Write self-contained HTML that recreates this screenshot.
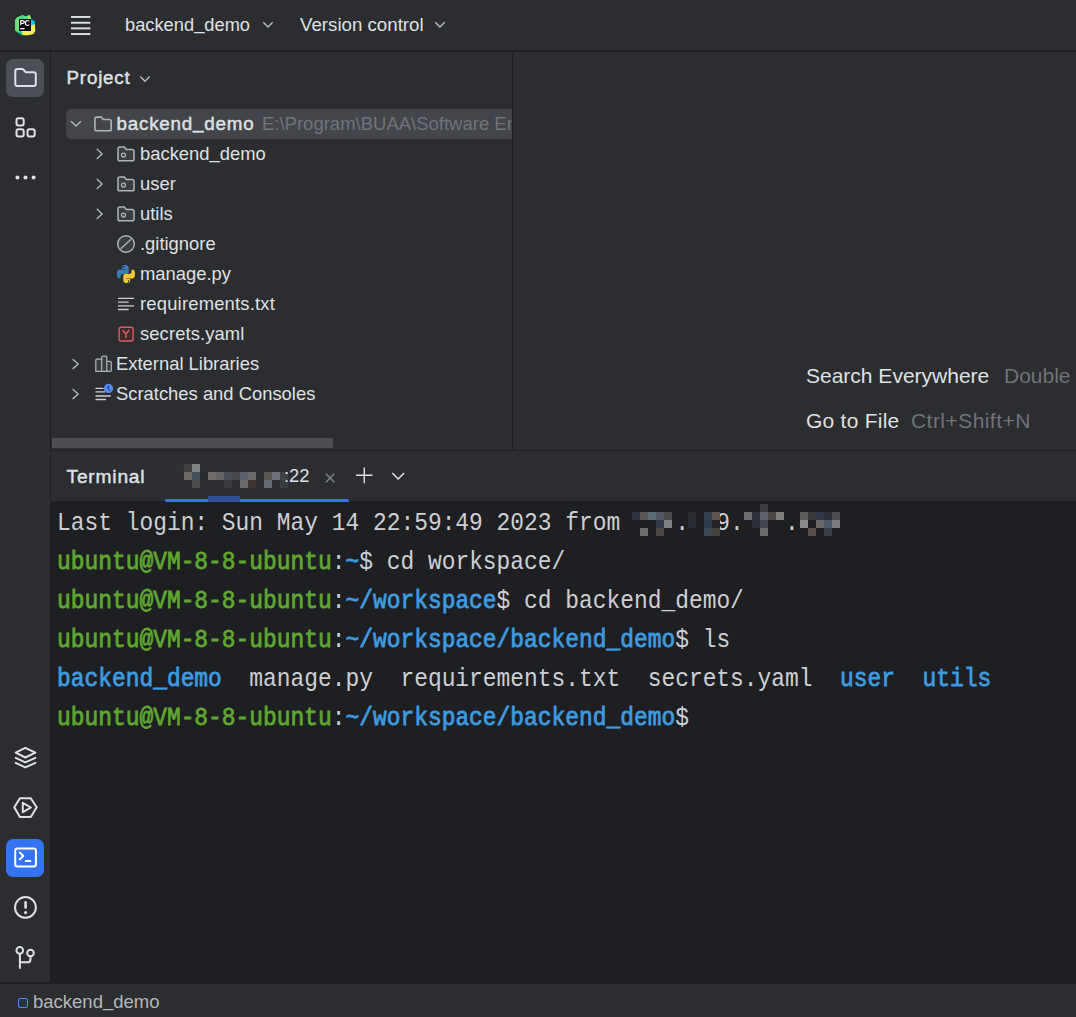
<!DOCTYPE html>
<html><head><meta charset="utf-8">
<style>
*{margin:0;padding:0;box-sizing:border-box}
html,body{width:1076px;height:1017px;overflow:hidden;background:#2B2D30}
body{position:relative;font-family:"Liberation Sans",sans-serif;color:#DFE1E5}
.a{position:absolute}
.t{position:absolute;white-space:pre;line-height:1}
.tl{position:absolute;white-space:pre;line-height:1;font-family:"Liberation Mono",monospace;font-size:22.9px;color:#CDCFD4;transform:scaleY(1.12);transform-origin:0 0}
.g{color:#5FA730;-webkit-text-stroke:0.7px #5FA730}
.bl{color:#3D9BE0;-webkit-text-stroke:0.7px #3D9BE0}
svg{position:absolute;left:0;top:0;overflow:visible}
.u{position:relative;top:-2px}
</style></head><body>

<div class="a" style="left:0;top:50px;width:1076px;height:2px;background:#1E1F22"></div>
<div class="a" style="left:50px;top:51px;width:1px;height:931px;background:#1E1F22"></div>
<div class="a" style="left:512px;top:51px;width:1px;height:399px;background:#1E1F22"></div>
<div class="a" style="left:51px;top:450px;width:1025px;height:1px;background:#1E1F22"></div>
<div class="a" style="left:51px;top:501px;width:1025px;height:481px;background:#1E1F22"></div>
<div class="a" style="left:0;top:982px;width:1076px;height:2px;background:#1E1F22"></div>
<div class="a" style="left:6px;top:58.5px;width:38px;height:38px;background:#4C4F55;border-radius:7px"></div>
<div class="a" style="left:6px;top:838.5px;width:38px;height:38px;background:#3574F0;border-radius:7px"></div>
<div class="a" style="left:66px;top:109px;width:446px;height:30px;background:#43454A;border-radius:5px 0 0 5px"></div>
<div class="a" style="left:52px;top:438px;width:281px;height:10px;background:#4D4E52"></div>
<div class="a" style="left:165px;top:499px;width:184px;height:3px;background:#3574F0;border-radius:1.5px"></div>
<svg width="1076" height="1017" viewBox="0 0 1076 1017">
<g>
<polygon points="15,20 17,17.5 22,15 26,16.5 29.6,14.8 31.2,19 31.2,31 21,31 22.5,35.2 17.5,32.5 15.2,30.5" fill="#3DDC84"/>
<polygon points="15,20 17,17.5 20,16.2 19,31 15.2,30.5" fill="#6BE07A"/>
<polygon points="22,15 26,16.5 29.6,14.8 31.2,19 24,19" fill="#4EE08A"/>
<polygon points="27,17 29.6,14.8 31.2,19 28,19" fill="#A9E55A"/>
<polygon points="21,31 31,31 31,24 34.8,23.5 35.3,31 33.5,34 28,35.2 22.5,35.2" fill="#F5F24A"/>
<polygon points="31,19.2 35,21.3 34.6,24.2 31,25.5" fill="#07C3F2"/>
<polygon points="17.5,32.5 22.5,35.2 21,31" fill="#17C39A"/>
<rect x="19" y="19" width="12" height="12" fill="#000"/>
<rect x="20.2" y="28" width="4.4" height="1.3" fill="#fff"/>
<path d="M20.8 25.3 V20.6 H22.8 Q24.3 20.6 24.3 22 Q24.3 23.4 22.8 23.4 H20.8" fill="none" stroke="#fff" stroke-width="1.2"/>
<path d="M29.3 21.3 Q28.6 20.5 27.4 20.5 Q25.4 20.5 25.4 22.95 Q25.4 25.4 27.4 25.4 Q28.6 25.4 29.3 24.6" fill="none" stroke="#fff" stroke-width="1.2"/>
</g>
<rect x="71" y="16" width="19.3" height="1.9" fill="#DFE1E5"/>
<rect x="71" y="21.8" width="19.3" height="1.9" fill="#DFE1E5"/>
<rect x="71" y="27.4" width="19.3" height="1.9" fill="#DFE1E5"/>
<rect x="71" y="33.1" width="19.3" height="1.9" fill="#DFE1E5"/>
<path d="M263.3 22.3 L267.95 27 L272.65 22.3" fill="none" stroke="#B7BAC1" stroke-width="1.5"/>
<path d="M435.3 22.3 L439.95 27 L444.65 22.3" fill="none" stroke="#B7BAC1" stroke-width="1.5"/>
<path d="M140.3 76.5 L145 81.2 L149.7 76.5" fill="none" stroke="#B7BAC1" stroke-width="1.4"/>
<path d="M15.3 71.1 Q15.3 69.1 17.3 69.1 L22.8 69.1 L25.9 72.2 L33.8 72.2 Q35.8 72.2 35.8 74.2 L35.8 84 Q35.8 86 33.8 86 L17.3 86 Q15.3 86 15.3 84 Z" fill="none" stroke="#DFE1E5" stroke-width="2" stroke-linejoin="round" stroke-linecap="round"/>
<rect x="16.5" y="118.2" width="7.2" height="7.2" rx="2" fill="none" stroke="#DFE1E5" stroke-width="2" stroke-linejoin="round" stroke-linecap="round"/>
<rect x="16.5" y="129.3" width="7.2" height="7.2" rx="2" fill="none" stroke="#DFE1E5" stroke-width="2" stroke-linejoin="round" stroke-linecap="round"/>
<rect x="27.5" y="129.3" width="7.2" height="7.2" rx="2" fill="none" stroke="#DFE1E5" stroke-width="2" stroke-linejoin="round" stroke-linecap="round"/>
<circle cx="17.4" cy="177.5" r="2" fill="#DFE1E5"/>
<circle cx="25.5" cy="177.5" r="2" fill="#DFE1E5"/>
<circle cx="33.6" cy="177.5" r="2" fill="#DFE1E5"/>
<path d="M25.3 747.8 L35.4 752.7 L25.3 757.5 L15.7 752.7 Z" fill="none" stroke="#DFE1E5" stroke-width="2" stroke-linejoin="round" stroke-linecap="round" stroke-width="1.8"/>
<path d="M15.7 757.9 L25.3 762.4 L35.4 757.9" fill="none" stroke="#DFE1E5" stroke-width="2" stroke-linejoin="round" stroke-linecap="round" stroke-width="1.8"/>
<path d="M15.7 762.9 L25.3 767.4 L35.4 762.9" fill="none" stroke="#DFE1E5" stroke-width="2" stroke-linejoin="round" stroke-linecap="round" stroke-width="1.8"/>
<path d="M14.3 807.3 L19.9 798.2 L30.8 798.2 L36.7 807.3 L30.8 816.9 L19.9 816.9 Z" fill="none" stroke="#DFE1E5" stroke-width="2" stroke-linejoin="round" stroke-linecap="round" stroke-width="1.8"/>
<path d="M22.8 802.8 L30.9 807.5 L22.8 812.2 Z" fill="none" stroke="#DFE1E5" stroke-width="2" stroke-linejoin="round" stroke-linecap="round" stroke-width="1.8"/>
<rect x="15.25" y="848.4" width="20.65" height="18.1" rx="2.2" fill="none" stroke="#fff" stroke-width="2"/>
<path d="M19.8 852.6 L23.3 855.9 L19.8 859.2" fill="none" stroke="#fff" stroke-width="2" stroke-linecap="round" stroke-linejoin="round"/>
<rect x="25" y="860" width="6.2" height="2" fill="#fff"/>
<circle cx="25.45" cy="907.45" r="10.4" fill="none" stroke="#DFE1E5" stroke-width="2" stroke-linejoin="round" stroke-linecap="round"/>
<path d="M25.6 902.3 L25.6 907.5" stroke="#DFE1E5" stroke-width="2.6" stroke-linecap="round"/>
<circle cx="25.6" cy="912.6" r="1.6" fill="#DFE1E5"/>
<circle cx="19.75" cy="950.4" r="3.3" fill="none" stroke="#DFE1E5" stroke-width="2" stroke-linejoin="round" stroke-linecap="round"/>
<circle cx="30.5" cy="953" r="3.3" fill="none" stroke="#DFE1E5" stroke-width="2" stroke-linejoin="round" stroke-linecap="round"/>
<path d="M19.9 953.8 L19.9 968" fill="none" stroke="#DFE1E5" stroke-width="2" stroke-linejoin="round" stroke-linecap="round" stroke-linecap="butt"/>
<path d="M19.9 962.35 L27.3 962.35 Q30.5 962.35 30.5 959.15 L30.5 956.3" fill="none" stroke="#DFE1E5" stroke-width="2" stroke-linejoin="round" stroke-linecap="round" stroke-linecap="butt"/>
<path d="M71.3 121.4 L76 126 L80.6 121.4" fill="none" stroke="#B4B7BE" stroke-width="1.4" stroke-linecap="round" stroke-linejoin="round"/>
<path d="M97.2 149.30 L102.1 153.95 L97.2 158.60" fill="none" stroke="#B4B7BE" stroke-width="1.4" stroke-linecap="round" stroke-linejoin="round"/>
<path d="M97.2 179.30 L102.1 183.95 L97.2 188.60" fill="none" stroke="#B4B7BE" stroke-width="1.4" stroke-linecap="round" stroke-linejoin="round"/>
<path d="M97.2 209.30 L102.1 213.95 L97.2 218.60" fill="none" stroke="#B4B7BE" stroke-width="1.4" stroke-linecap="round" stroke-linejoin="round"/>
<path d="M73 359.50 L78.2 364.05 L73 368.60" fill="none" stroke="#B4B7BE" stroke-width="1.4" stroke-linecap="round" stroke-linejoin="round"/>
<path d="M73 389.50 L78.2 394.05 L73 398.60" fill="none" stroke="#B4B7BE" stroke-width="1.4" stroke-linecap="round" stroke-linejoin="round"/>
<path d="M94.9 119 Q94.9 117.1 96.8 117.1 L101.3 117.1 L103.2 119.5 L109.3 119.5 Q111.2 119.5 111.2 121.4 L111.2 128.9 Q111.2 130.8 109.3 130.8 L96.8 130.8 Q94.9 130.8 94.9 128.9 Z" fill="none" stroke="#B0B3B9" stroke-width="1.6"/>
<path d="M118 149 Q118 147.1 119.9 147.1 L124.4 147.1 L126.2 149.5 L132.1 149.5 Q134 149.5 134 151.4 L134 158.9 Q134 160.8 132.1 160.8 L119.9 160.8 Q118 160.8 118 158.9 Z" fill="#3A3C40" stroke="#B0B3B9" stroke-width="1.5"/>
<circle cx="123.5" cy="155.1" r="2" fill="none" stroke="#B0B3B9" stroke-width="1.3"/>
<path d="M118 179 Q118 177.1 119.9 177.1 L124.4 177.1 L126.2 179.5 L132.1 179.5 Q134 179.5 134 181.4 L134 188.9 Q134 190.8 132.1 190.8 L119.9 190.8 Q118 190.8 118 188.9 Z" fill="#3A3C40" stroke="#B0B3B9" stroke-width="1.5"/>
<circle cx="123.5" cy="185.1" r="2" fill="none" stroke="#B0B3B9" stroke-width="1.3"/>
<path d="M118 209 Q118 207.1 119.9 207.1 L124.4 207.1 L126.2 209.5 L132.1 209.5 Q134 209.5 134 211.4 L134 218.9 Q134 220.8 132.1 220.8 L119.9 220.8 Q118 220.8 118 218.9 Z" fill="#3A3C40" stroke="#B0B3B9" stroke-width="1.5"/>
<circle cx="123.5" cy="215.1" r="2" fill="none" stroke="#B0B3B9" stroke-width="1.3"/>
<circle cx="126" cy="244" r="8.3" fill="#3A3C40" stroke="#B0B3B9" stroke-width="1.4"/>
<path d="M120.8 248.8 L131 239.2" stroke="#B0B3B9" stroke-width="1.4"/>
<g>
<path d="M125.8 265 C121.5 265 121.8 266.9 121.8 266.9 L121.8 268.9 L125.9 268.9 L125.9 269.6 L119.3 269.6 C119.3 269.6 117 269.3 117 273.9 C117 278.5 119 278.3 119 278.3 L120.5 278.3 L120.5 276.2 C120.5 276.2 120.4 274.1 122.5 274.1 L126.7 274.1 C126.7 274.1 128.7 274.2 128.7 272.2 L128.7 268.8 C128.7 268.8 129 265 125.8 265 Z" fill="#3D7BB8"/>
<path d="M126.2 283 C130.5 283 130.2 281.1 130.2 281.1 L130.2 279.1 L126.1 279.1 L126.1 278.4 L132.7 278.4 C132.7 278.4 135 278.7 135 274.1 C135 269.5 133 269.7 133 269.7 L131.5 269.7 L131.5 271.8 C131.5 271.8 131.6 273.9 129.5 273.9 L125.3 273.9 C125.3 273.9 123.3 273.8 123.3 275.8 L123.3 279.2 C123.3 279.2 123 283 126.2 283 Z" fill="#F2CA30"/>
<circle cx="123.4" cy="266.9" r="0.8" fill="#1E1F22"/>
<circle cx="128.6" cy="281.1" r="0.8" fill="#1E1F22"/>
</g>
<path d="M118.6 298.4 L133.5 298.4" stroke="#CED0D6" stroke-width="1.4" stroke-linecap="round"/>
<path d="M118.6 302.1 L128.2 302.1" stroke="#CED0D6" stroke-width="1.4" stroke-linecap="round"/>
<path d="M118.6 305.9 L133.5 305.9" stroke="#CED0D6" stroke-width="1.4" stroke-linecap="round"/>
<path d="M118.6 309.5 L128.2 309.5" stroke="#CED0D6" stroke-width="1.4" stroke-linecap="round"/>
<rect x="119.1" y="327.2" width="14" height="13.8" rx="2" fill="#3F2A2B" stroke="#DB5C5C" stroke-width="1.4"/>
<path d="M122.6 330 L125.9 334 L129.3 330 M125.9 334 L125.9 338.2" fill="none" stroke="#DB5C5C" stroke-width="1.5"/>
<path d="M95.8 371.3 L95.8 360.2 Q95.8 359.2 96.8 359.2 L101.7 359.2 L101.7 357.2 Q101.7 356.2 102.7 356.2 L105.8 356.2 Q106.8 356.2 106.8 357.2 L106.8 361.4 L110.3 361.4 Q111.3 361.4 111.3 362.4 L111.3 370.3 Q111.3 371.3 110.3 371.3 Z M101.7 359.2 L101.7 371.3 M106.8 361.4 L106.8 371.3" fill="#3A3C40" stroke="#B0B3B9" stroke-width="1.2"/>
<path d="M96 388.4 L103 388.4" stroke="#CED0D6" stroke-width="1.4" stroke-linecap="round"/>
<path d="M96 391.9 L104.6 391.9" stroke="#CED0D6" stroke-width="1.4" stroke-linecap="round"/>
<path d="M96 396 L110.3 396" stroke="#CED0D6" stroke-width="1.4" stroke-linecap="round"/>
<path d="M96 399.5 L105.5 399.5" stroke="#CED0D6" stroke-width="1.4" stroke-linecap="round"/>
<circle cx="108.5" cy="388.4" r="4.6" fill="#548AF7"/>
<path d="M108.2 385.6 L108.2 388.6 L110.2 390.6" fill="none" stroke="#1E1F22" stroke-width="1"/>
<path d="M325.9 473.8 L334.3 482.3 M334.3 473.8 L325.9 482.3" stroke="#868A91" stroke-width="1.3"/>
<path d="M356.1 475.3 L372.4 475.3 M364.3 467.4 L364.3 483.2" stroke="#DFE1E5" stroke-width="1.4"/>
<path d="M392.3 473 L398.2 479 L404.1 473" fill="none" stroke="#DFE1E5" stroke-width="1.5"/>
</svg>
<div class="t" style="left:125px;top:16px;font-size:18.3px">backend<span class="u">_</span>demo</div>
<div class="t" style="left:300px;top:16px;font-size:18.7px">Version control</div>
<div class="t" style="left:66.5px;top:69px;font-size:18.8px;-webkit-text-stroke:0.45px #DFE1E5;letter-spacing:0.8px">Project</div>
<div class="t" style="left:116.5px;top:115px;font-size:18.8px;-webkit-text-stroke:0.45px #DFE1E5;letter-spacing:0.8px">backend<span class="u">_</span>demo</div>
<div class="a" style="left:0;top:0;width:512px;height:450px;overflow:hidden"><div class="t" style="left:262px;top:115px;font-size:18.5px;color:#6F737A">E:\Program\BUAA\Software Engineering</div></div>
<div class="t" style="left:140px;top:145px;font-size:18.4px;letter-spacing:0px">backend<span class="u">_</span>demo</div>
<div class="t" style="left:140px;top:175px;font-size:18.4px;letter-spacing:0px">user</div>
<div class="t" style="left:140px;top:205px;font-size:18.4px;letter-spacing:0px">utils</div>
<div class="t" style="left:140px;top:235px;font-size:18.4px;letter-spacing:0px">.gitignore</div>
<div class="t" style="left:140px;top:265px;font-size:18.4px;letter-spacing:0px">manage.py</div>
<div class="t" style="left:140px;top:295px;font-size:18.4px;letter-spacing:0.2px">requirements.txt</div>
<div class="t" style="left:140px;top:325px;font-size:18.4px;letter-spacing:0.1px">secrets.yaml</div>
<div class="t" style="left:116px;top:355px;font-size:18.4px">External Libraries</div>
<div class="t" style="left:116px;top:385px;font-size:18.4px">Scratches and Consoles</div>
<div class="t" style="left:806px;top:365px;font-size:21px">Search Everywhere</div>
<div class="t" style="left:1004px;top:365px;font-size:21px;color:#6F737A">Double Shift</div>
<div class="t" style="left:806px;top:410px;font-size:21px;letter-spacing:0.25px">Go to File</div>
<div class="t" style="left:911px;top:410px;font-size:21px;letter-spacing:0.45px;color:#6F737A">Ctrl+Shift+N</div>
<div class="t" style="left:66.5px;top:467px;font-size:19.2px;-webkit-text-stroke:0.45px #DFE1E5;letter-spacing:0.8px">Terminal</div>
<div class="a" style="left:176px;top:464px;width:8px;height:8px;background:#2F3136"></div>
<div class="a" style="left:184px;top:464px;width:8px;height:8px;background:#404143"></div>
<div class="a" style="left:192px;top:464px;width:8px;height:8px;background:#7F8382"></div>
<div class="a" style="left:184px;top:472px;width:8px;height:8px;background:#6E6862"></div>
<div class="a" style="left:192px;top:472px;width:8px;height:8px;background:#46505A"></div>
<div class="a" style="left:200px;top:472px;width:8px;height:8px;background:#26292E"></div>
<div class="a" style="left:208px;top:472px;width:8px;height:8px;background:#6F6B69"></div>
<div class="a" style="left:216px;top:472px;width:8px;height:8px;background:#636466"></div>
<div class="a" style="left:224px;top:472px;width:8px;height:8px;background:#4A4E56"></div>
<div class="a" style="left:232px;top:472px;width:8px;height:8px;background:#45474C"></div>
<div class="a" style="left:240px;top:472px;width:8px;height:8px;background:#5A636C"></div>
<div class="a" style="left:248px;top:472px;width:8px;height:8px;background:#686966"></div>
<div class="a" style="left:256px;top:472px;width:8px;height:8px;background:#2B2E33"></div>
<div class="a" style="left:264px;top:472px;width:8px;height:8px;background:#5B5550"></div>
<div class="a" style="left:272px;top:472px;width:8px;height:8px;background:#6E7278"></div>
<div class="a" style="left:280px;top:472px;width:8px;height:8px;background:#3F4146"></div>
<div class="a" style="left:192px;top:480px;width:8px;height:8px;background:#4A4B4D"></div>
<div class="a" style="left:224px;top:480px;width:8px;height:8px;background:#37393D"></div>
<div class="a" style="left:240px;top:480px;width:8px;height:8px;background:#6A6868"></div>
<div class="a" style="left:248px;top:480px;width:8px;height:8px;background:#3A332E"></div>
<div class="a" style="left:264px;top:480px;width:8px;height:8px;background:#626971"></div>
<div class="a" style="left:280px;top:480px;width:8px;height:8px;background:#3A3C40"></div>
<div class="a" style="left:208px;top:496px;width:32px;height:6px;background:#2F4F8F"></div>
<div class="t" style="left:284px;top:467px;font-size:18.4px">:22</div>
<div class="tl" style="left:57px;top:510.5px">Last login: Sun May 14 22:59:49 2023 from    .  9.   .</div>
<div class="tl" style="left:57px;top:549.5px"><span class="g">ubuntu@VM-8-8-ubuntu</span>:<span class="bl">~</span>$ cd workspace/</div>
<div class="tl" style="left:57px;top:588.5px"><span class="g">ubuntu@VM-8-8-ubuntu</span>:<span class="bl">~/workspace</span>$ cd backend_demo/</div>
<div class="tl" style="left:57px;top:627.5px"><span class="g">ubuntu@VM-8-8-ubuntu</span>:<span class="bl">~/workspace/backend_demo</span>$ ls</div>
<div class="tl" style="left:57px;top:666.5px"><span class="bl">backend_demo</span>  manage.py  requirements.txt  secrets.yaml  <span class="bl">user</span>  <span class="bl">utils</span></div>
<div class="tl" style="left:57px;top:705.5px"><span class="g">ubuntu@VM-8-8-ubuntu</span>:<span class="bl">~/workspace/backend_demo</span>$</div>
<div class="a" style="left:632px;top:512px;width:8px;height:8px;background:#2F3540"></div>
<div class="a" style="left:640px;top:512px;width:8px;height:8px;background:#5A5550"></div>
<div class="a" style="left:648px;top:512px;width:8px;height:8px;background:#5C6A72"></div>
<div class="a" style="left:656px;top:512px;width:8px;height:8px;background:#4F5660"></div>
<div class="a" style="left:664px;top:512px;width:8px;height:8px;background:#4A4846"></div>
<div class="a" style="left:688px;top:512px;width:8px;height:8px;background:#2A2C30"></div>
<div class="a" style="left:704px;top:512px;width:8px;height:8px;background:#34404C"></div>
<div class="a" style="left:712px;top:512px;width:8px;height:8px;background:#5E544E"></div>
<div class="a" style="left:744px;top:512px;width:8px;height:8px;background:#6A6C70"></div>
<div class="a" style="left:752px;top:512px;width:8px;height:8px;background:#2E323A"></div>
<div class="a" style="left:760px;top:512px;width:8px;height:8px;background:#5E636B"></div>
<div class="a" style="left:768px;top:512px;width:8px;height:8px;background:#4A4542"></div>
<div class="a" style="left:776px;top:512px;width:8px;height:8px;background:#7F7E7A"></div>
<div class="a" style="left:800px;top:512px;width:8px;height:8px;background:#5A5C5E"></div>
<div class="a" style="left:808px;top:512px;width:8px;height:8px;background:#3A3836"></div>
<div class="a" style="left:816px;top:512px;width:8px;height:8px;background:#2F3744"></div>
<div class="a" style="left:824px;top:512px;width:8px;height:8px;background:#2C3038"></div>
<div class="a" style="left:832px;top:512px;width:8px;height:8px;background:#4A4C50"></div>
<div class="a" style="left:656px;top:520px;width:8px;height:8px;background:#313844"></div>
<div class="a" style="left:712px;top:520px;width:8px;height:8px;background:#222428"></div>
<div class="a" style="left:664px;top:520px;width:8px;height:8px;background:#7D8285"></div>
<div class="a" style="left:688px;top:520px;width:8px;height:8px;background:#272A33"></div>
<div class="a" style="left:704px;top:520px;width:8px;height:8px;background:#2E3A48"></div>
<div class="a" style="left:752px;top:520px;width:8px;height:8px;background:#2E3038"></div>
<div class="a" style="left:760px;top:520px;width:8px;height:8px;background:#3F444D"></div>
<div class="a" style="left:800px;top:520px;width:8px;height:8px;background:#8B8B8D"></div>
<div class="a" style="left:816px;top:520px;width:8px;height:8px;background:#6A6560"></div>
<div class="a" style="left:824px;top:520px;width:8px;height:8px;background:#4C5866"></div>
<div class="a" style="left:832px;top:520px;width:8px;height:8px;background:#7A7C80"></div>
<div class="a" style="left:640px;top:528px;width:8px;height:8px;background:#6A6C6E"></div>
<div class="a" style="left:656px;top:528px;width:8px;height:8px;background:#4A4742"></div>
<div class="a" style="left:704px;top:528px;width:8px;height:8px;background:#3C4650"></div>
<div class="a" style="left:712px;top:528px;width:8px;height:8px;background:#46413A"></div>
<div class="a" style="left:760px;top:528px;width:8px;height:8px;background:#6A6A6A"></div>
<div class="a" style="left:808px;top:528px;width:8px;height:8px;background:#57504A"></div>
<div class="a" style="left:824px;top:528px;width:8px;height:8px;background:#3A4048"></div>
<div class="a" style="left:760px;top:504px;width:8px;height:8px;background:#3A3C42"></div>
<div class="a" style="left:18px;top:998px;width:10px;height:10px;border:1.5px solid #548AF7;background:#25324D;border-radius:2px"></div>
<div class="t" style="left:33px;top:993px;font-size:18.5px;color:#B4B7BD">backend<span class="u">_</span>demo</div>
</body></html>
